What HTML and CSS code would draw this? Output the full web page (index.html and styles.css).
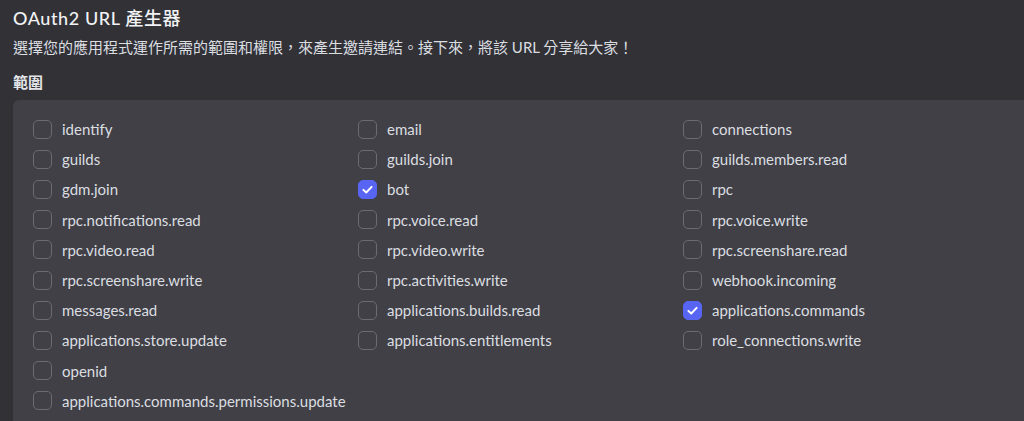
FILE: index.html
```html
<!DOCTYPE html>
<html lang="zh-Hant">
<head>
<meta charset="utf-8">
<title>OAuth2 URL 產生器</title>
<link rel="stylesheet" href="styles.css">
</head>
<body>
<div class="page">
  <h1 class="title">OAuth2 URL 產生器</h1>
  <p class="subtitle">選擇您的應用程式運作所需的範圍和權限，來產生邀請連結。接下來，將該 URL 分享給大家！</p>
  <h2 class="label">範圍</h2>
  <div class="panel">
    <div class="grid">
      <label class="item"><span class="box"></span><span class="name">identify</span></label>
      <label class="item"><span class="box"></span><span class="name">email</span></label>
      <label class="item"><span class="box"></span><span class="name">connections</span></label>

      <label class="item"><span class="box"></span><span class="name">guilds</span></label>
      <label class="item"><span class="box"></span><span class="name">guilds.join</span></label>
      <label class="item"><span class="box"></span><span class="name">guilds.members.read</span></label>

      <label class="item"><span class="box"></span><span class="name">gdm.join</span></label>
      <label class="item"><span class="box checked"><svg viewBox="0 0 20 20" width="15" height="15"><path d="M4.5 10.5 L8.3 14 L15.5 6.5" fill="none" stroke="#fff" stroke-width="2.6" stroke-linecap="round" stroke-linejoin="round"/></svg></span><span class="name">bot</span></label>
      <label class="item"><span class="box"></span><span class="name">rpc</span></label>

      <label class="item"><span class="box"></span><span class="name">rpc.notifications.read</span></label>
      <label class="item"><span class="box"></span><span class="name">rpc.voice.read</span></label>
      <label class="item"><span class="box"></span><span class="name">rpc.voice.write</span></label>

      <label class="item"><span class="box"></span><span class="name">rpc.video.read</span></label>
      <label class="item"><span class="box"></span><span class="name">rpc.video.write</span></label>
      <label class="item"><span class="box"></span><span class="name">rpc.screenshare.read</span></label>

      <label class="item"><span class="box"></span><span class="name">rpc.screenshare.write</span></label>
      <label class="item"><span class="box"></span><span class="name">rpc.activities.write</span></label>
      <label class="item"><span class="box"></span><span class="name">webhook.incoming</span></label>

      <label class="item"><span class="box"></span><span class="name">messages.read</span></label>
      <label class="item"><span class="box"></span><span class="name">applications.builds.read</span></label>
      <label class="item"><span class="box checked"><svg viewBox="0 0 20 20" width="15" height="15"><path d="M4.5 10.5 L8.3 14 L15.5 6.5" fill="none" stroke="#fff" stroke-width="2.6" stroke-linecap="round" stroke-linejoin="round"/></svg></span><span class="name">applications.commands</span></label>

      <label class="item"><span class="box"></span><span class="name">applications.store.update</span></label>
      <label class="item"><span class="box"></span><span class="name">applications.entitlements</span></label>
      <label class="item"><span class="box"></span><span class="name">role_connections.write</span></label>

      <label class="item"><span class="box"></span><span class="name">openid</span></label>
      <span class="empty"></span>
      <span class="empty"></span>

      <label class="item"><span class="box"></span><span class="name">applications.commands.permissions.update</span></label>
    </div>
  </div>
</div>
</body>
</html>
```

FILE: styles.css
```css
html, body {
  margin: 0;
  padding: 0;
  background: #313136;
  height: 100%;
  overflow: hidden;
}

body {
  font-family: Lato, "Noto Sans CJK TC", sans-serif;
  color: #dbdee1;
}

.page {
  padding: 5px 0 0 13px;
}

.title {
  margin: 0;
  font-size: 18px;
  letter-spacing: 0.6px;
  font-weight: 500;
  line-height: 26px;
  color: #f2f3f5;
}

.subtitle {
  margin: 4px 0 0;
  font-size: 15px;
  line-height: 24px;
  color: #dbdee1;
}

.label {
  margin: 13px 0 0;
  font-size: 15px;
  font-weight: 700;
  line-height: 20px;
  color: #e3e5e8;
}

.panel {
  margin-top: 8px;
  background: #404046;
  border-radius: 6px 0 0 0;
  padding: 14px 0 0 20px;
  height: 321px;
  box-sizing: border-box;
}

.grid {
  display: grid;
  grid-template-columns: repeat(3, 325px);
  grid-auto-rows: 30.2px;
}

.item {
  display: flex;
  align-items: center;
  gap: 10px;
  font-size: 15px;
  color: #dbdee1;
  white-space: nowrap;
}

.box {
  width: 19px;
  height: 19px;
  box-sizing: border-box;
  border: 1px solid #6b6c73;
  border-radius: 5px;
  flex: none;
  display: flex;
  align-items: center;
  justify-content: center;
}

.box.checked {
  background: #5865f2;
  border-color: #5865f2;
}
```
